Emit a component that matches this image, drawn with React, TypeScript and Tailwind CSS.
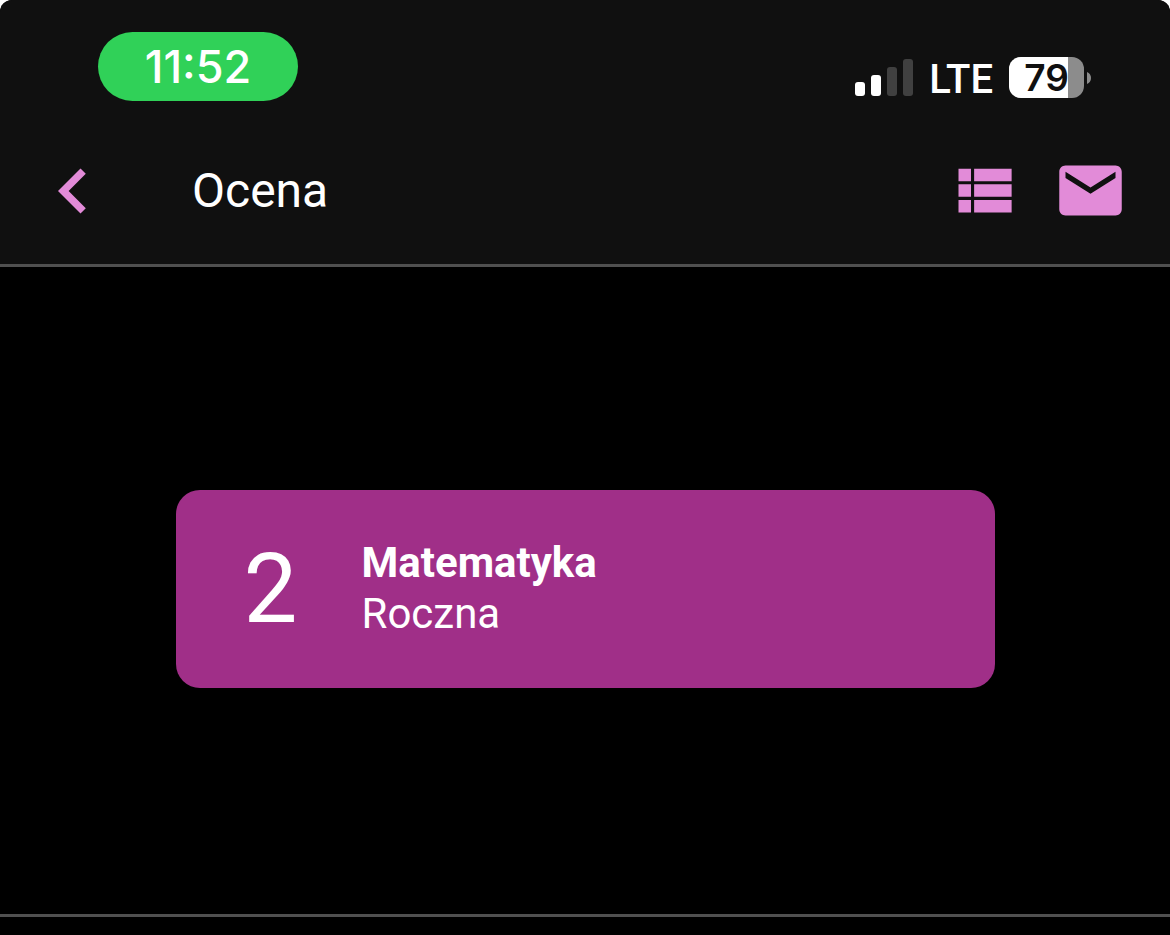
const grade = {
  value: "2",
  subject: "Matematyka",
  kind: "Roczna",
};

const BATTERY_LEVEL = 79;

function BackIcon() {
  return (
    <svg viewBox="0 0 24 24" width={90} height={90} fill="currentColor">
      <path d="M15.41 7.41L14 6l-6 6 6 6 1.41-1.41L10.83 12z" />
    </svg>
  );
}

function ListIcon() {
  return (
    <svg viewBox="0 0 24 24" width={75} height={75} fill="currentColor">
      <path d="M4 14h4v-4H4v4zm0 5h4v-4H4v4zM4 9h4V5H4v4zm5 5h12v-4H9v4zm0 5h12v-4H9v4zM9 5v4h12V5H9z" />
    </svg>
  );
}

function MailIcon() {
  return (
    <svg viewBox="0 0 24 24" width={75} height={75} fill="currentColor">
      <path d="M20 4H4c-1.1 0-1.99.9-1.99 2L2 18c0 1.1.9 2 2 2h16c1.1 0 2-.9 2-2V6c0-1.1-.9-2-2-2zm0 4l-8 5-8-5V6l8 5 8-5v2z" />
    </svg>
  );
}

function SignalIcon() {
  return (
    <svg viewBox="0 0 58 37" width={58} height={37} aria-label="Signal">
      <rect x="0" y="23" width="10" height="14" rx="3" fill="#fff" />
      <rect x="16" y="16" width="10" height="21" rx="3" fill="#fff" />
      <rect x="32" y="8" width="10" height="29" rx="3" fill="#404040" />
      <rect x="48" y="0" width="10" height="37" rx="3" fill="#404040" />
    </svg>
  );
}

function Battery() {
  return (
    <div className="flex items-center gap-[3px]">
      <div className="relative flex h-[41px] w-[75px] items-center justify-center rounded-xl bg-[#8c8c8c]">
        <div
          className="absolute inset-y-0 left-0 rounded-l-xl bg-white"
          style={{ width: `${BATTERY_LEVEL}%` }}
        />
        <span className="relative font-['Inter',sans-serif] text-[37px] leading-none font-semibold text-[#101010]">
          {BATTERY_LEVEL}
        </span>
      </div>
      <svg viewBox="0 0 4 12" width={4} height={12} fill="#8c8c8c">
        <path d="M0 0c2.500 1 4 3.300 4 6s-1.500 5-4 6z" />
      </svg>
    </div>
  );
}

function StatusBar() {
  return (
    <div className="flex h-[117px] items-start justify-between pr-[79px] pl-[98px]">
      <div className="mt-8 flex h-[69px] w-[200px] items-center justify-center rounded-full bg-[#30d158] font-['Inter',sans-serif] text-[45px] leading-none font-medium">
        11:52
      </div>
      <div className="mt-[57px] flex h-[41px] items-center gap-4">
        <SignalIcon />
        <span className="pt-1 text-[40px] leading-none font-medium">LTE</span>
        <Battery />
      </div>
    </div>
  );
}

export default function App() {
  return (
    <div className="flex min-h-screen flex-col overflow-hidden rounded-t-xl bg-black font-['Roboto',sans-serif] text-white">
      {/* Header */}
      <header className="border-b-[3px] border-[#505050] bg-[#101010]">
        <StatusBar />
        <div className="flex h-[147px] items-center pr-[42px] pl-7 text-[#e28bd8]">
          <button aria-label="Wstecz">
            <BackIcon />
          </button>
          <h1 className="ml-[74px] flex-1 text-[48px] leading-none text-white">
            Ocena
          </h1>
          <div className="flex items-center gap-8">
            <button aria-label="Lista">
              <ListIcon />
            </button>
            <button aria-label="Wiadomości">
              <MailIcon />
            </button>
          </div>
        </div>
      </header>

      {/* Grade card */}
      <main className="flex flex-1 items-center justify-center pb-[3px]">
        <div className="flex h-[198px] w-[70%] items-center rounded-3xl bg-[#a02f88]">
          <div className="w-[186px] pl-1 text-center text-[96px] leading-none">
            {grade.value}
          </div>
          <div className="pb-0.5 text-[42px] leading-[51px]">
            <h2 className="font-bold">{grade.subject}</h2>
            <p>{grade.kind}</p>
          </div>
        </div>
      </main>

      <footer className="h-[21px] border-t-[3px] border-[#505050]" />
    </div>
  );
}
